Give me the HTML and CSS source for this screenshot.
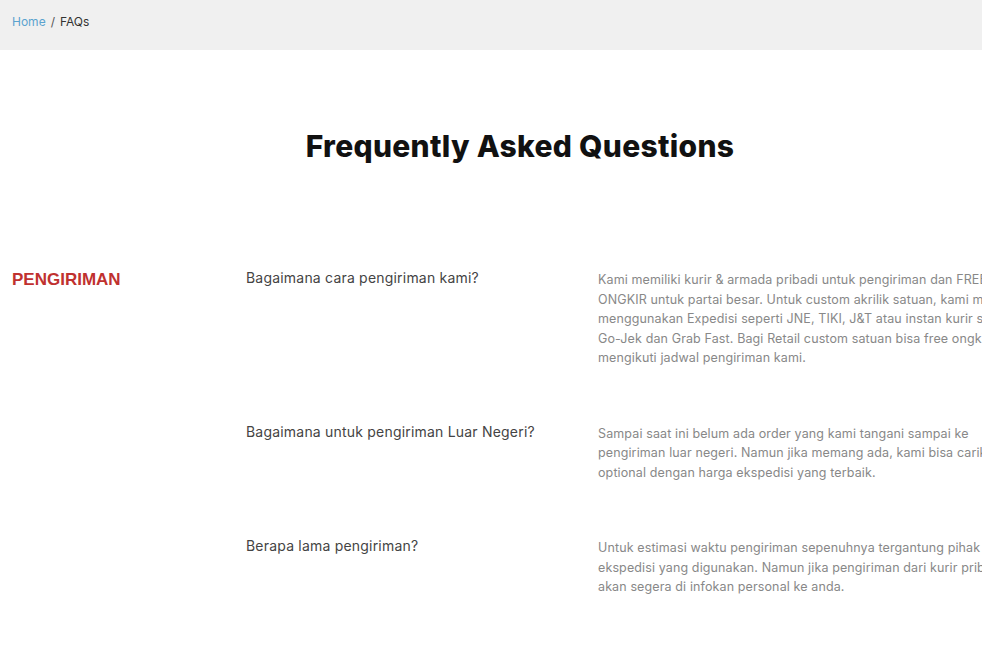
FILE: index.html
```html
<!DOCTYPE html>
<html lang="id">
<head>
<meta charset="utf-8">
<title>FAQs</title>
<link rel="stylesheet" href="styles.css">
</head>
<body>
<div class="page">
  <nav class="breadcrumb"><a class="crumb-link" href="#">Home</a><span class="sep">/</span><span class="crumb-current">FAQs</span></nav>
  <h1 class="title">Frequently Asked Questions</h1>
  <section class="faq">
    <h2 class="category">PENGIRIMAN</h2>
    <div class="items">
      <div class="item">
        <div class="question">Bagaimana cara pengiriman kami?</div>
        <div class="answer">Kami memiliki kurir &amp; armada pribadi untuk pengiriman dan FREE ONGKIR untuk partai besar. Untuk custom akrilik satuan, kami masih menggunakan Expedisi seperti JNE, TIKI, J&amp;T atau instan kurir seperti Go-Jek dan Grab Fast. Bagi Retail custom satuan bisa free ongkir mengikuti jadwal pengiriman kami.</div>
      </div>
      <div class="item">
        <div class="question">Bagaimana untuk pengiriman Luar Negeri?</div>
        <div class="answer">Sampai saat ini belum ada order yang kami tangani sampai ke pengiriman luar negeri. Namun jika memang ada, kami bisa carikan optional dengan harga ekspedisi yang terbaik.</div>
      </div>
      <div class="item">
        <div class="question">Berapa lama pengiriman?</div>
        <div class="answer">Untuk estimasi waktu pengiriman sepenuhnya tergantung pihak ekspedisi yang digunakan. Namun jika pengiriman dari kurir pribadi akan segera di infokan personal ke anda.</div>
      </div>
    </div>
  </section>
</div>
</body>
</html>
```

FILE: styles.css
```css
html, body {
  margin: 0;
  padding: 0;
  overflow: hidden;
  background: #fff;
}
body {
  font-family: Inter, "Open Sans", sans-serif;
  color: #333;
}
.page {
  width: 1040px;
}
.breadcrumb {
  height: 50px;
  background: #f0f0f0;
  display: flex;
  align-items: flex-start;
  padding: 14px 12px 0;
  font-size: 12px;
  line-height: 16px;
  box-sizing: border-box;
}
.crumb-link {
  color: #5ba3cf;
  text-decoration: none;
}
.sep {
  color: #555;
  margin: 0 5px;
}
.crumb-current {
  color: #333;
}
.title {
  margin: 78px 0 0;
  text-align: center;
  font-size: 30px;
  line-height: 36px;
  font-weight: 800;
  letter-spacing: 0.3px;
  color: #111;
}
.faq {
  margin-top: 104px;
  padding: 0 12px;
  display: grid;
  grid-template-columns: 234px 1fr;
}
.category {
  margin: 0;
  font-family: "Liberation Sans", Arial, sans-serif;
  font-size: 17px;
  font-weight: 700;
  line-height: 24px;
  color: #c0312f;
}
.items {
  display: flex;
  flex-direction: column;
  gap: 54px;
}
.item {
  display: grid;
  grid-template-columns: 352px 430px;
}
.question {
  font-size: 14px;
  line-height: 20px;
  letter-spacing: 0.2px;
  color: #444;
}
.answer {
  font-size: 12.5px;
  line-height: 19.5px;
  letter-spacing: 0.12px;
  color: #888;
  margin-top: 2px;
}
```
